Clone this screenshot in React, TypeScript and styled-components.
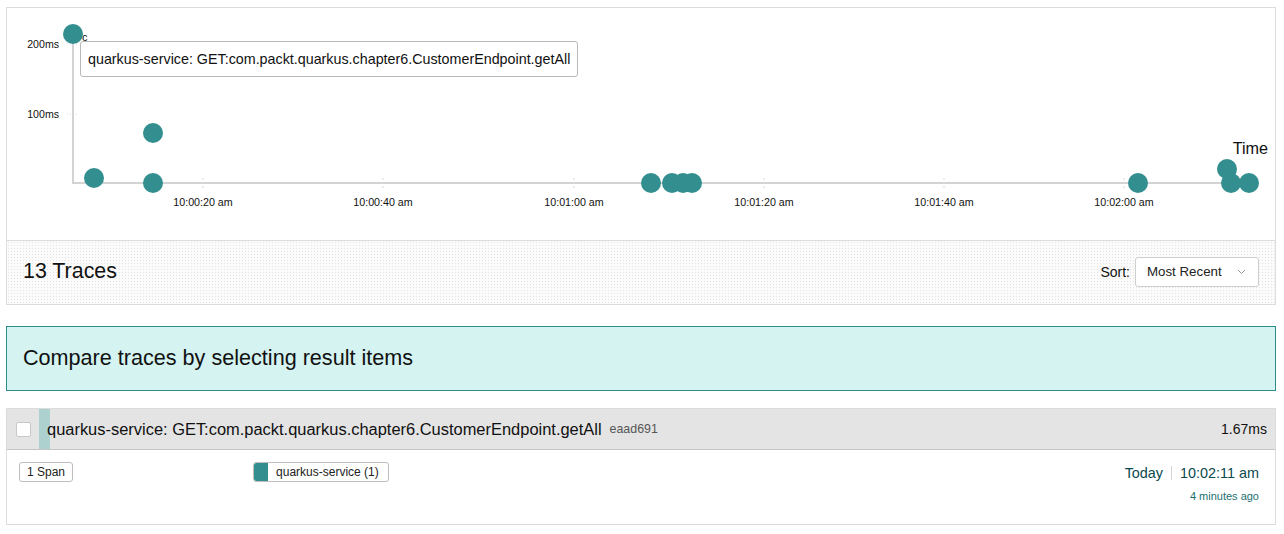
import React from "react";
import styled, { createGlobalStyle } from "styled-components";

const Global = createGlobalStyle`
  html, body { margin: 0; padding: 0; background: #fff; }
  body { font-family: "Liberation Sans", Arial, sans-serif; color: #222; }
`;

const Page = styled.div`
  padding: 7px 8px 0 6px;
  display: flex;
  flex-direction: column;
`;

const ResultsPanel = styled.section`
  border: 1px solid #dcdcdc;
  display: flex;
  flex-direction: column;
`;

const ChartArea = styled.div`
  position: relative;
  height: 232px;
`;

const Tooltip = styled.div`
  position: absolute;
  left: 73px;
  top: 33px;
  height: 34px;
  padding: 0 7px;
  display: flex;
  align-items: center;
  border: 1px solid #b8b8b8;
  border-radius: 3px;
  background: #fff;
  font-size: 14.3px;
  color: #111;
  white-space: nowrap;
`;

const ResultsHeader = styled.div`
  border-top: 1px solid #dcdcdc;
  height: 64px;
  padding: 0 16px 2px 16px;
  box-sizing: border-box;
  display: flex;
  align-items: center;
  justify-content: space-between;
  background-color: #fbfbfb;
  background-image: radial-gradient(#e4e4e4 0.6px, transparent 0.8px);
  background-size: 3px 3px;
`;

const Count = styled.h2`
  margin: 0;
  font-size: 21.4px;
  font-weight: 400;
  color: #111;
`;

const SortGroup = styled.div`
  display: flex;
  align-items: center;
  gap: 5px;
  font-size: 14px;
  color: #111;
`;

const Select = styled.div`
  width: 124px;
  height: 30px;
  box-sizing: border-box;
  border: 1px solid #cfcfcf;
  border-radius: 3px;
  background: #fff;
  display: flex;
  align-items: center;
  justify-content: space-between;
  padding: 0 12px 0 11px;
  font-size: 13.3px;
  color: #222;
`;

const CompareBox = styled.div`
  margin-top: 21px;
  border: 1px solid #2e8c8c;
  background: #d4f3f1;
  display: flex;
  align-items: center;
  padding-left: 16px;
  padding-bottom: 2px;
  box-sizing: border-box;
  height: 65px;
  font-size: 21.6px;
  color: #111;
`;

const TraceItem = styled.article`
  margin-top: 17px;
  border: 1px solid #dcdcdc;
  height: 117px;
  box-sizing: border-box;
  display: flex;
  flex-direction: column;
`;

const TraceHeader = styled.div`
  height: 40px;
  background: #e4e4e4;
  border-bottom: 1px solid #c4c4c4;
  display: flex;
  align-items: stretch;
`;

const CheckCell = styled.div`
  width: 32px;
  display: flex;
  align-items: center;
  justify-content: center;
`;

const Checkbox = styled.span`
  width: 15px;
  height: 15px;
  box-sizing: border-box;
  border: 1px solid #c8c8c8;
  border-radius: 2px;
  background: #fff;
  margin-left: 1px;
`;

const Stripe = styled.div`
  width: 11px;
  background-color: #d5e9e8;
  background-image: radial-gradient(#96c4c1 0.6px, transparent 0.9px);
  background-size: 2px 2px;
`;

const TitleRow = styled.div`
  flex: 1;
  display: flex;
  align-items: center;
  margin-left: -3px;
  padding-right: 8px;
`;

const TraceTitle = styled.span`
  font-size: 16.45px;
  color: #111;
`;

const TraceId = styled.span`
  margin-left: 8px;
  font-size: 12.4px;
  color: #555;
`;

const Duration = styled.span`
  margin-left: auto;
  font-size: 14px;
  color: #111;
`;

const TraceBody = styled.div`
  flex: 1;
  display: flex;
  align-items: flex-start;
  padding: 12px 16px 0 12px;
`;

const Tag = styled.span`
  display: inline-flex;
  align-items: center;
  height: 20px;
  box-sizing: border-box;
  border: 1px solid #bdbdbd;
  border-radius: 3px;
  background: #fff;
  font-size: 12px;
  color: #222;
  padding: 0 7px;
`;

const ServiceTag = styled(Tag)`
  margin-left: 180px;
  padding: 0 9px 0 0;
  overflow: hidden;
`;

const Swatch = styled.span`
  align-self: stretch;
  width: 14px;
  background: #338f8f;
  margin-right: 8px;
  border-radius: 2px 0 0 2px;
`;

const TimeInfo = styled.div`
  margin-left: auto;
  display: flex;
  flex-direction: column;
  align-items: flex-end;
  padding-top: 3px;
`;

const TimeLine = styled.div`
  display: flex;
  align-items: center;
  font-size: 14.4px;
  color: #0b4a4f;
`;

const Divider = styled.span`
  width: 1px;
  height: 14px;
  background: #d6d6d6;
  margin: 0 8px;
`;

const Ago = styled.div`
  margin-top: 9px;
  font-size: 11px;
  color: #1d6f70;
`;

const OX = 7;
const OY = 8;
const dots: [number, number][] = [
  [73, 34],
  [94, 178],
  [153, 133],
  [153, 183],
  [651, 183],
  [672, 183],
  [683, 183],
  [692, 183],
  [1138, 183],
  [1227, 169],
  [1231, 183],
  [1249, 183],
];
const ticks: [number, string][] = [
  [203, "10:00:20 am"],
  [383, "10:00:40 am"],
  [574, "10:01:00 am"],
  [764, "10:01:20 am"],
  [944, "10:01:40 am"],
  [1124, "10:02:00 am"],
];

function Chart() {
  return (
    <svg width="1268" height="232" style={{ display: "block" }}>
      <g transform={`translate(${-OX},${-OY})`} fontFamily='"Liberation Sans", Arial, sans-serif'>
        <line x1={73} y1={34} x2={73} y2={183} stroke="#d3d3d3" strokeWidth={2} />
        <line x1={72} y1={183} x2={1250} y2={183} stroke="#d3d3d3" strokeWidth={2} />
        <line x1={67} y1={114} x2={79} y2={114} stroke="#d8d8d8" strokeWidth={1} strokeDasharray="1 2" />
        <line x1={67} y1={44} x2={79} y2={44} stroke="#d8d8d8" strokeWidth={1} strokeDasharray="1 2" />
        <text x={59} y={48} fontSize={10.6} textAnchor="end" fill="#111">200ms</text>
        <text x={59} y={118} fontSize={10.6} textAnchor="end" fill="#111">100ms</text>
        {ticks.map(([x, label]) => (
          <g key={label}>
            <line x1={x} y1={178} x2={x} y2={190} stroke="#d8d8d8" strokeWidth={1} strokeDasharray="2 2" />
            <text x={x} y={206} fontSize={10.7} textAnchor="middle" fill="#111">{label}</text>
          </g>
        ))}
        <text x={1268} y={154} fontSize={16.2} textAnchor="end" fill="#111">Time</text>
        <text x={82} y={41} fontSize={11} fill="#111">c</text>
        {dots.map(([x, y], i) => (
          <circle key={i} cx={x} cy={y} r={10} fill="#338f8f" />
        ))}
      </g>
    </svg>
  );
}

const Chevron = () => (
  <svg width="9" height="6" viewBox="0 0 9 6">
    <path d="M1 1 L4.5 4.5 L8 1" fill="none" stroke="#999" strokeWidth="1" />
  </svg>
);

export default function App() {
  return (
    <>
      <Global />
      <Page>
        <ResultsPanel>
          <ChartArea>
            <Chart />
            <Tooltip>quarkus-service: GET:com.packt.quarkus.chapter6.CustomerEndpoint.getAll</Tooltip>
          </ChartArea>
          <ResultsHeader>
            <Count>13 Traces</Count>
            <SortGroup>
              <span>Sort:</span>
              <Select>
                <span>Most Recent</span>
                <Chevron />
              </Select>
            </SortGroup>
          </ResultsHeader>
        </ResultsPanel>
        <CompareBox>Compare traces by selecting result items</CompareBox>
        <TraceItem>
          <TraceHeader>
            <CheckCell>
              <Checkbox />
            </CheckCell>
            <Stripe />
            <TitleRow>
              <TraceTitle>quarkus-service: GET:com.packt.quarkus.chapter6.CustomerEndpoint.getAll</TraceTitle>
              <TraceId>eaad691</TraceId>
              <Duration>1.67ms</Duration>
            </TitleRow>
          </TraceHeader>
          <TraceBody>
            <Tag>1 Span</Tag>
            <ServiceTag>
              <Swatch />
              quarkus-service (1)
            </ServiceTag>
            <TimeInfo>
              <TimeLine>
                <span>Today</span>
                <Divider />
                <span>10:02:11 am</span>
              </TimeLine>
              <Ago>4 minutes ago</Ago>
            </TimeInfo>
          </TraceBody>
        </TraceItem>
      </Page>
    </>
  );
}
